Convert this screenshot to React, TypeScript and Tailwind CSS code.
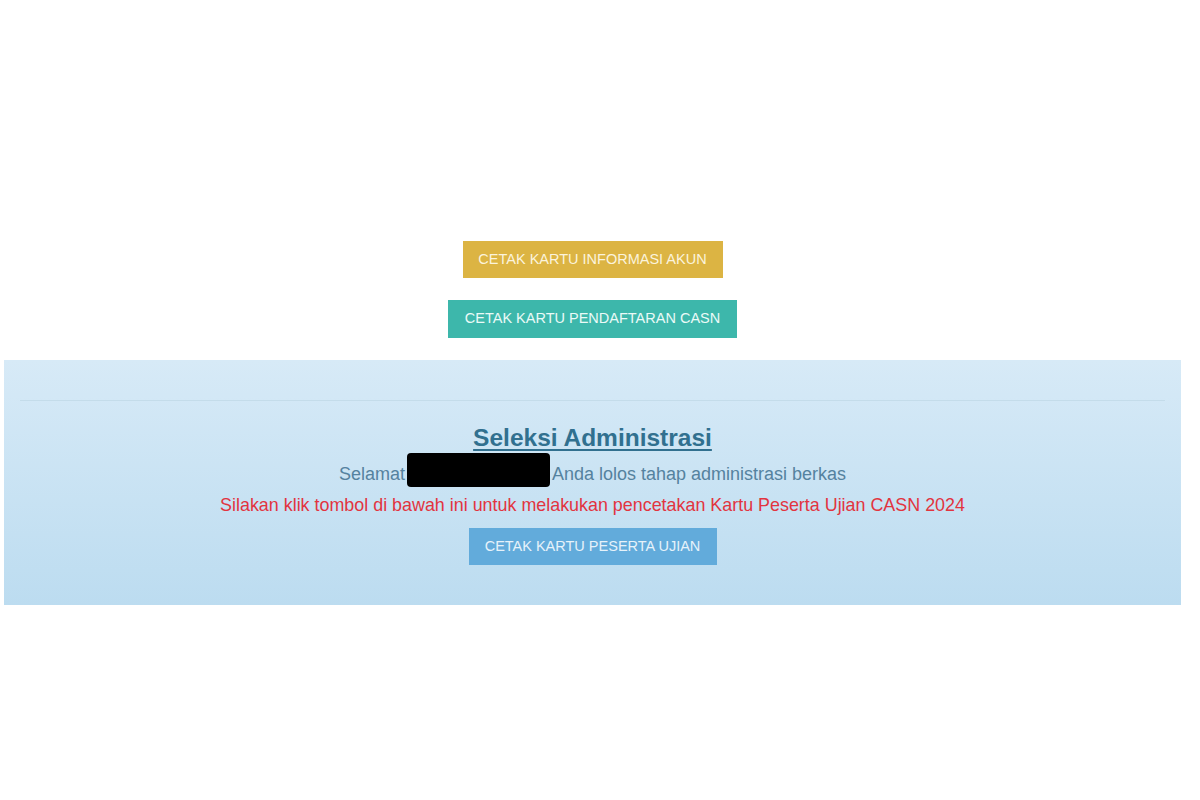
import React from 'react';

const font = { fontFamily: '"Liberation Sans", Arial, sans-serif' };

export default function App() {
  return (
    <div className="w-[1200px] h-[800px] bg-white" style={font}>
      <div className="w-[1185px] pt-[241px]">
        {/* Top action buttons */}
        <div className="flex flex-col items-center gap-[22px]">
          <button className="h-[37px] w-[260px] bg-[#dcb443] text-[14.5px] text-[#fbf3dc] uppercase">
            Cetak Kartu Informasi Akun
          </button>
          <button className="h-[38px] w-[289px] bg-[#3db7ab] text-[14.5px] text-[#eafaf7] uppercase">
            Cetak Kartu Pendaftaran CASN
          </button>
        </div>

        {/* Selection result panel */}
        <div className="mx-[4px] mt-[22px] h-[245px] bg-gradient-to-b from-[#d7eaf7] to-[#bcdcf0] px-[16px] pt-[40px]">
          <div className="border-t border-[#c4dcea]" />
          <div className="flex flex-col items-center pt-[22px]">
            <h3 className="text-[24.5px] leading-[30px] font-bold text-[#31708f] underline underline-offset-[3px]">
              Seleksi Administrasi
            </h3>
            <p className="flex items-start text-[18px] leading-[27px] text-[#55829f]">
              <span className="mt-[8px]">Selamat</span>
              <span className="mx-[2px] inline-block h-[34px] w-[143px] rounded-[4px] bg-black" />
              <span className="mt-[8px]">Anda lolos tahap administrasi berkas</span>
            </p>
            <p className="mt-[4px] text-[17.9px] leading-[27px] text-[#e2343f]">
              Silakan klik tombol di bawah ini untuk melakukan pencetakan Kartu Peserta Ujian CASN 2024
            </p>
            <button className="mt-[9px] h-[37px] w-[248px] bg-[#62abdb] text-[14.5px] text-[#e6f2fa] uppercase">
              Cetak Kartu Peserta Ujian
            </button>
          </div>
        </div>
      </div>
    </div>
  );
}
